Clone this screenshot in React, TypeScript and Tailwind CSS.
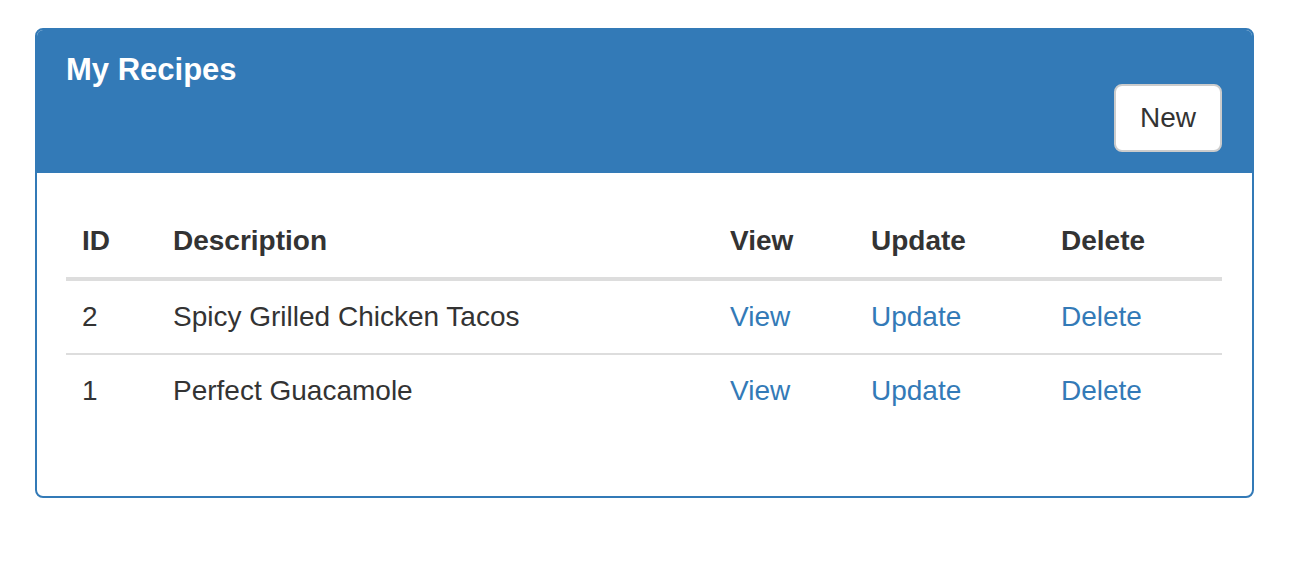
import React from "react";

const rows = [
  { id: "2", desc: "Spicy Grilled Chicken Tacos" },
  { id: "1", desc: "Perfect Guacamole" },
];

const cols = "grid grid-cols-[91px_557px_141px_190px_177px]";

export default function App() {
  return (
    <div
      className="min-h-[564px] bg-white text-[#333] pt-[28px] px-[35px]"
      style={{ fontFamily: '"Liberation Sans", Arial, Helvetica, sans-serif' }}
    >
      <div className="w-[1219px] border-2 border-[#337ab7] rounded-[8px] overflow-hidden">
        <div className="bg-[#337ab7] pl-[29px] pr-[30px] pt-[25px] pb-[19px] border-b-2 border-[#337ab7]">
          <h3 className="text-white font-bold text-[31px] leading-[29px] m-0">My Recipes</h3>
          <div className="flex justify-end">
            <button className="bg-white border-2 border-[#ccc] rounded-[8px] h-[68px] px-[24px] text-[28px] leading-[40px] text-[#333]">
              New
            </button>
          </div>
        </div>
        <div className="pt-[32px] pb-[30px] pl-[29px] pr-[30px]">
          <div className="mb-[39px] text-[28px] leading-[40px]">
            <div className={`${cols} border-b-4 border-[#ddd] font-bold`}>
              {["ID", "Description", "View", "Update", "Delete"].map((h) => (
                <div key={h} className="p-[16px]">
                  {h}
                </div>
              ))}
            </div>
            {rows.map((r, i) => (
              <div key={r.id} className={`${cols} ${i > 0 ? "border-t-2 border-[#ddd]" : ""}`}>
                <div className="p-[16px]">{r.id}</div>
                <div className="p-[16px]">{r.desc}</div>
                <div className="p-[16px] text-[#337ab7]">View</div>
                <div className="p-[16px] text-[#337ab7]">Update</div>
                <div className="p-[16px] text-[#337ab7]">Delete</div>
              </div>
            ))}
          </div>
        </div>
      </div>
    </div>
  );
}
